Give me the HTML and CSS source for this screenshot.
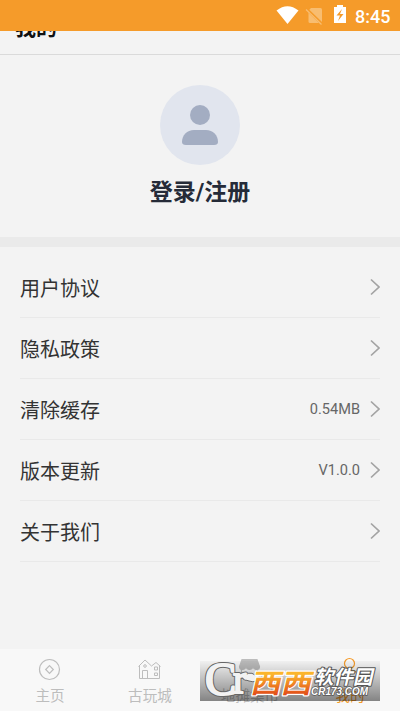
FILE: index.html
```html
<!DOCTYPE html>
<html lang="zh-CN">
<head>
<meta charset="utf-8">
<title>我的</title>
<link rel="stylesheet" href="styles.css">
</head>
<body>
<div class="screen">
  <header class="status">
    <svg class="status-icons" width="76" height="31" viewBox="0 0 76 31">
      <path d="M.5 10.5Q11.500 2 22.500 10.500L11.500 24Z" fill="#fff"/>
      <path d="M35 8H44.500Q46 8 46 9.500V23H34Q32.500 23 32.500 21.500V10.500Z" fill="#f8bd70"/>
      <path d="M30.500 9L46 24" stroke="#f59b2a" stroke-width="3"/>
      <path d="M30 9.500L45.500 24.500" stroke="#f8bd70" stroke-width="1.300"/>
      <path d="M58 7H61V5H67V7H70V23H58Z" fill="#fff"/>
      <path d="M66 9L60.500 15.500H64L62 21L67.500 14H64Z" fill="#f59b2a"/>
    </svg>
    <span class="clock">8:45</span>
  </header>
  <div class="titlebar"><h1>我的</h1></div>
  <section class="profile">
    <svg width="80" height="80" viewBox="0 0 80 80">
      <circle cx="40" cy="40" r="40" fill="#e1e5ee"/>
      <circle cx="40" cy="30" r="10" fill="#a3adc2"/>
      <path d="M22 57C22 50 27 45 34 45H46C53 45 58 50 58 57Q58 60 54 60H26Q22 60 22 57Z" fill="#a3adc2"/>
    </svg>
    <div class="login">登录/注册</div>
  </section>
  <main class="menu">
    <div class="row"><span>用户协议</span><svg class="arrow" viewBox="0 0 10 18"><path d="M1 1.500L9 9L1 16.500"/></svg></div>
    <div class="row"><span>隐私政策</span><svg class="arrow" viewBox="0 0 10 18"><path d="M1 1.500L9 9L1 16.500"/></svg></div>
    <div class="row"><span>清除缓存</span><span class="value">0.54MB</span><svg class="arrow" viewBox="0 0 10 18"><path d="M1 1.500L9 9L1 16.500"/></svg></div>
    <div class="row"><span>版本更新</span><span class="value">V1.0.0</span><svg class="arrow" viewBox="0 0 10 18"><path d="M1 1.500L9 9L1 16.500"/></svg></div>
    <div class="row"><span>关于我们</span><svg class="arrow" viewBox="0 0 10 18"><path d="M1 1.500L9 9L1 16.500"/></svg></div>
  </main>
  <nav class="tabs">
    <div class="tab">
      <svg width="24" height="24" viewBox="0 0 24 24"><circle cx="11.500" cy="12.500" r="10"/><path d="M11.500 8.700L15.300 12.500L11.500 16.300L7.700 12.500Z"/></svg>
      <span>主页</span>
    </div>
    <div class="tab">
      <svg width="24" height="24" viewBox="0 0 24 24" class="thin"><path d="M.5 9.500L7 3L13.500 9L18 5.500L22.500 9.500M1.500 8.500V21.500H21.500V8.500M4.500 21.500V13.500H9.500V21.500"/><circle cx="7" cy="9" r="1.300"/><path d="M16.500 10H19.500V13H16.500ZM16.500 16H19.500V18.500H16.500Z"/></svg>
      <span>古玩城</span>
    </div>
    <div class="tab">
      <svg width="24" height="24" viewBox="0 0 24 24"><path fill="currentColor" d="M4 2.500H19L21.500 9.500Q21.500 12.500 18.500 12.500Q16.500 12.500 15 10.500Q13.500 12.500 11.500 12.500Q9.500 12.500 8 10.500Q6.500 12.500 4.500 12.500Q1.500 12.500 1.500 9.500Z"/><path d="M3.500 13V21.500H19.500V13"/></svg>
      <span>地摊集市</span>
    </div>
    <div class="tab active">
      <svg width="24" height="24" viewBox="0 0 24 24"><circle cx="11.500" cy="6.500" r="5"/><path d="M3 21.500Q3 13 11.500 13Q20 13 20 21.500Z"/></svg>
      <span>我的</span>
    </div>
  </nav>
  <svg class="watermark" width="180" height="40" viewBox="0 0 180 40">
    <defs>
      <linearGradient id="shade" x2="0" y2="1"><stop stop-opacity=".03"/><stop offset="1" stop-opacity=".47"/></linearGradient>
      <linearGradient id="flame" x2="0" y2="1"><stop offset=".2" stop-color="#fbb52c"/><stop offset=".9" stop-color="#df4418"/></linearGradient>
    </defs>
    <rect width="180" height="40" fill="url(#shade)"/>
    <g class="mark">
      <text class="edge" x="5" y="34" font-size="47">C</text>
      <text class="edge" x="33" y="32" font-size="40">r</text>
      <path d="M42 17Q49 9 55 14Q61 16 63 14Q57 23 49 20Q45 19 42 17Z"/>
      <text class="face" x="5" y="34" font-size="47">C</text>
      <text class="face" x="33" y="32" font-size="40">r</text>
    </g>
    <g class="brand" transform="translate(50 32) skewX(-13) scale(1.090 .96)"><text font-size="28">西</text><text x="28" font-size="28">西</text></g>
    <g class="soft" transform="translate(114 23) skewX(-13)"><text font-size="19.500">软件园</text></g>
    <text class="domain" x="111" y="33.500" font-size="10.500" textLength="57" lengthAdjust="spacingAndGlyphs">CR173.COM</text>
  </svg>
</div>
</body>
</html>
```
FILE: styles.css
```css
* { box-sizing: border-box; }
body { margin: 0; font-family: Roboto, "Noto Sans CJK SC", sans-serif; }
.screen { position: relative; width: 400px; height: 711px; background: #f3f3f3; display: flex; flex-direction: column; overflow: hidden; }
.status { height: 31px; flex: none; background: #f59b2a; display: flex; align-items: center; justify-content: flex-end; padding-right: 10px; gap: 3px; color: #fff; }
.clock { font-size: 18px; font-weight: 500; line-height: 31px; width: 35px; padding-top: 2px; white-space: nowrap; }
.titlebar { height: 24px; flex: none; overflow: hidden; display: flex; align-items: flex-end; padding: 0 15px 13px; border-bottom: 1px solid #dadada; }
.titlebar h1 { margin: 0; font-size: 21px; line-height: 26px; font-weight: 700; color: #111; }
.profile { height: 192px; flex: none; padding-top: 30px; display: flex; flex-direction: column; align-items: center; border-bottom: 10px solid #eaeaea; }
.profile svg { display: block; flex: none; }
.login { margin-top: 11px; font-size: 23px; line-height: 34px; font-weight: 700; color: #252b38; white-space: nowrap; }
.menu { flex: 1; padding: 10px 20px 0; }
.row { height: 61px; border-bottom: 1px solid #e9e9e9; display: flex; align-items: center; font-size: 20px; color: #333; }
.value { margin-left: auto; font-size: 14.6px; color: #666; }
.arrow { width: 10px; height: 18px; margin-left: auto; fill: none; stroke: #a3a3a3; stroke-width: 1.7; }
.value + .arrow { margin-left: 10px; }
.tabs { height: 62px; flex: none; background: #f8f8f8; display: grid; grid-template-columns: repeat(4, 1fr); }
.tab { display: flex; flex-direction: column; align-items: center; padding-top: 8px; color: #bdbdbd; font-size: 14.6px; line-height: 22px; }
.tab svg { display: block; margin-bottom: 4px; fill: none; stroke: currentColor; stroke-width: 1.2; }
.tab .thin { stroke-width: 1; }
.tab.active { color: #f59b2a; }
.watermark { position: absolute; left: 200px; top: 661px; overflow: visible; }
.watermark text { paint-order: stroke; stroke-linejoin: round; }
.mark { font-family: "Liberation Serif", serif; fill: #f2f2f2; stroke: #666; stroke-width: 1; }
.mark .edge { stroke: #666; stroke-width: 4; }
.mark .face { stroke: #f2f2f2; stroke-width: 2; }
.brand { font-weight: 700; fill: url(#flame); stroke: #fff; stroke-width: 2.4; }
.soft { font-weight: 700; fill: #fff; stroke: #555; stroke-width: 2; }
.domain { font-family: "Liberation Sans", sans-serif; font-weight: 700; font-style: italic; fill: #fff; stroke: #555; stroke-width: 1.5; }
```
